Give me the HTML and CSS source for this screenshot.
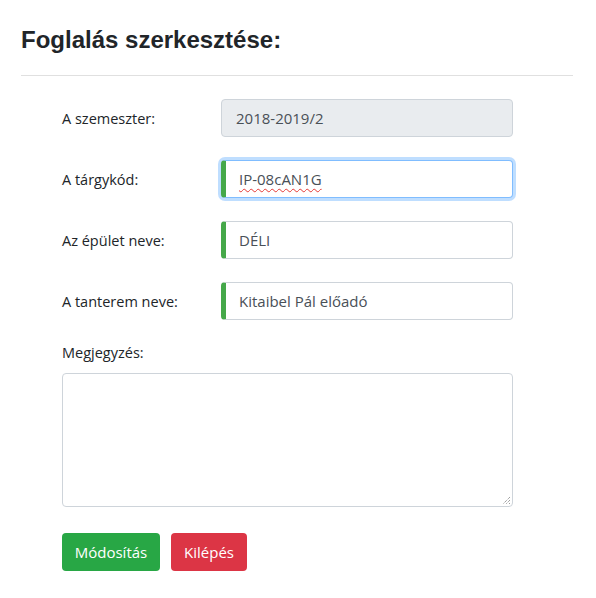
FILE: index.html
```html
<!DOCTYPE html>
<html lang="hu">
<head>
<meta charset="utf-8">
<title>Foglalás szerkesztése</title>
<link rel="stylesheet" href="styles.css">
</head>
<body>
<div class="page">
  <h3 class="title">Foglalás szerkesztése:</h3>
  <hr class="divider">
  <form class="form">
    <div class="row">
      <label class="label">A szemeszter:</label>
      <div class="control disabled">2018-2019/2</div>
    </div>
    <div class="row">
      <label class="label">A tárgykód:</label>
      <div class="control valid focused"><span class="spell">IP-08cAN1G</span></div>
    </div>
    <div class="row">
      <label class="label">Az épület neve:</label>
      <div class="control valid">DÉLI</div>
    </div>
    <div class="row">
      <label class="label">A tanterem neve:</label>
      <div class="control valid">Kitaibel Pál előadó</div>
    </div>
    <div class="note">
      <label class="label">Megjegyzés:</label>
      <div class="textarea">
        <svg class="grip" width="10" height="10" viewBox="0 0 10 10"><path d="M9 2 L2 9 M9 5 L5 9 M9 8 L8 9" stroke="#777" stroke-width="1" stroke-dasharray="1 1" fill="none"/></svg>
      </div>
    </div>
    <div class="buttons">
      <button type="button" class="btn btn-success">Módosítás</button>
      <button type="button" class="btn btn-danger">Kilépés</button>
    </div>
  </form>
</div>
</body>
</html>
```
FILE: styles.css
```css
* { box-sizing: border-box; }
html, body { margin: 0; padding: 0; background: #fff; }
body {
  font-family: "Open Sans", "Noto Sans", sans-serif;
  font-size: 15px;
  color: #212529;
}
.page {
  padding: 24px 23px 0 21px;
}
.title {
  margin: 0;
  font-family: "Liberation Sans", Arial, sans-serif;
  font-weight: bold;
  font-size: 24px;
  line-height: 32px;
  color: #212529;
}
.divider {
  margin: 19px 0 23px;
  border: 0;
  border-top: 1px solid #e0e0e0;
}
.form {
  padding-left: 41px;
  width: 533px;
}
.row {
  display: grid;
  grid-template-columns: 159px 292px;
  align-items: center;
  margin-bottom: 23px;
}
.label {
  font-size: 14.5px;
  color: #212529;
}
.control {
  height: 38px;
  border: 1px solid #ced4da;
  border-radius: 4px;
  padding: 0 12px 0 13px;
  display: flex;
  align-items: center;
  font-size: 15px;
  color: #495057;
  background: #fff;
}
.control.disabled {
  background: #e9ecef;
  padding-left: 14px;
}
.control.valid {
  border-left: 5px solid #45a849;
}
.control.focused {
  border-color: #80bdff;
  border-left-color: #45a849;
  box-shadow: 0 0 0 3px rgba(0, 123, 255, 0.25);
}
.spell {
  text-decoration: underline wavy #e53935;
  text-decoration-thickness: 1px;
  text-underline-offset: 3px;
  text-decoration-skip-ink: none;
}
.note {
  display: flex;
  flex-direction: column;
  gap: 11px;
  margin-top: 3px;
}
.textarea {
  position: relative;
  width: 451px;
  height: 134px;
  border: 1px solid #ced4da;
  border-radius: 4px;
}
.grip {
  position: absolute;
  right: 1px;
  bottom: 1px;
}
.buttons {
  display: flex;
  gap: 11px;
  margin-top: 26px;
}
.btn {
  height: 38px;
  border: 0;
  border-radius: 4px;
  padding: 0 12px;
  font-family: "Open Sans", "Noto Sans", sans-serif;
  font-size: 15px;
  color: #fff;
}
.btn-success { background: #28a745; width: 98px; }
.btn-danger { background: #dc3545; width: 76px; }
```
